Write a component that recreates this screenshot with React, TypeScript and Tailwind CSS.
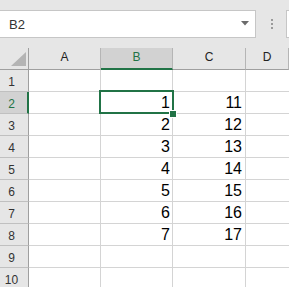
import React from "react";

const cols = ["A", "B", "C", "D"];
const data: Record<number, [string, string]> = {
  2: ["1", "11"],
  3: ["2", "12"],
  4: ["3", "13"],
  5: ["4", "14"],
  6: ["5", "15"],
  7: ["6", "16"],
  8: ["7", "17"],
};

export default function App() {
  const rows = [1, 2, 3, 4, 5, 6, 7, 8, 9, 10];
  return (
    <div className="w-[289px] h-[287px] overflow-hidden bg-[#e6e6e6] font-['Liberation_Sans',Arial,sans-serif]">
      {/* top bar */}
      <div className="h-[48px] pt-[10px] flex items-start">
        <div className="ml-[-1px] w-[257px] h-[28px] border border-[#c6c6c6] bg-white flex items-start pl-[9px] pr-[6px] shrink-0">
          <span className="flex-1 text-[13px] leading-[26px] pt-[1px] text-[#333]">B2</span>
          <svg width="8" height="5" viewBox="0 0 8 5" className="mt-[10px]">
            <path d="M0 0 H8 L4 4.5 Z" fill="#6b6b6b" />
          </svg>
        </div>
        <div className="ml-[15px] mt-[9px] flex flex-col gap-[2px] shrink-0">
          <div className="w-[2px] h-[2px] bg-[#9a9a9a]" />
          <div className="w-[2px] h-[2px] bg-[#9a9a9a]" />
          <div className="w-[2px] h-[2px] bg-[#9a9a9a]" />
        </div>
        <div className="ml-[13px] w-[20px] h-[28px] border border-[#c6c6c6] bg-white shrink-0" />
      </div>

      {/* grid */}
      <div className="relative">
        <div className="grid grid-cols-[29px_72px_72px_73px_1fr]">
          {/* header row */}
          <div className="h-[22px] bg-[#e6e6e6] border-r border-b border-[#9f9f9f] relative">
            <svg width="16" height="15" viewBox="0 0 16 15" className="absolute left-[11px] top-[4px]">
              <path d="M15 0 V14 H0 Z" fill="#b4b4b4" />
            </svg>
          </div>
          {cols.map((c) => {
            const sel = c === "B";
            return (
              <div
                key={c}
                className={
                  sel
                    ? "h-[22px] bg-[#d2d2d2] border-r border-r-[#b5b5b5] border-b-2 border-b-[#217346] text-center text-[12px] leading-[18px] text-[#217346]"
                    : "h-[22px] bg-[#e6e6e6] border-r border-r-[#b5b5b5] border-b border-b-[#9f9f9f] text-center text-[12px] leading-[18px] text-[#222]"
                }
              >
                {c}
              </div>
            );
          })}

          {rows.map((r) => {
            const sel = r === 2;
            const d = data[r];
            return (
              <React.Fragment key={r}>
                <div
                  className={
                    sel
                      ? "h-[22px] bg-[#d2d2d2] border-r-2 border-r-[#217346] border-b border-b-[#c0c0c0] text-center pr-[4px] pt-[4px] text-[12px] leading-[17px] text-[#217346]"
                      : "h-[22px] bg-[#e6e6e6] border-r border-r-[#9f9f9f] border-b border-b-[#c0c0c0] text-center pr-[5px] pt-[4px] text-[12px] leading-[17px] text-[#333]"
                  }
                >
                  {r}
                </div>
                <div className="h-[22px] bg-white border-r border-b border-[#d4d4d4]" />
                <div className="h-[22px] bg-white border-r border-b border-[#d4d4d4] text-right pr-[2px] text-[16px] leading-[21px] text-black">
                  {d ? d[0] : ""}
                </div>
                <div className="h-[22px] bg-white border-r border-b border-[#d4d4d4] text-right pr-[3px] text-[16px] leading-[21px] text-black">
                  {d ? d[1] : ""}
                </div>
                <div className="h-[22px] bg-white border-b border-[#d4d4d4]" />
              </React.Fragment>
            );
          })}
        </div>

        {/* selection box */}
        <div className="absolute left-[99px] top-[42px] w-[75px] h-[24px] border-2 border-[#217346] pointer-events-none" />
        <div className="absolute left-[169px] top-[62px] w-[8px] h-[8px] bg-[#217346] border border-white" />
      </div>
    </div>
  );
}
